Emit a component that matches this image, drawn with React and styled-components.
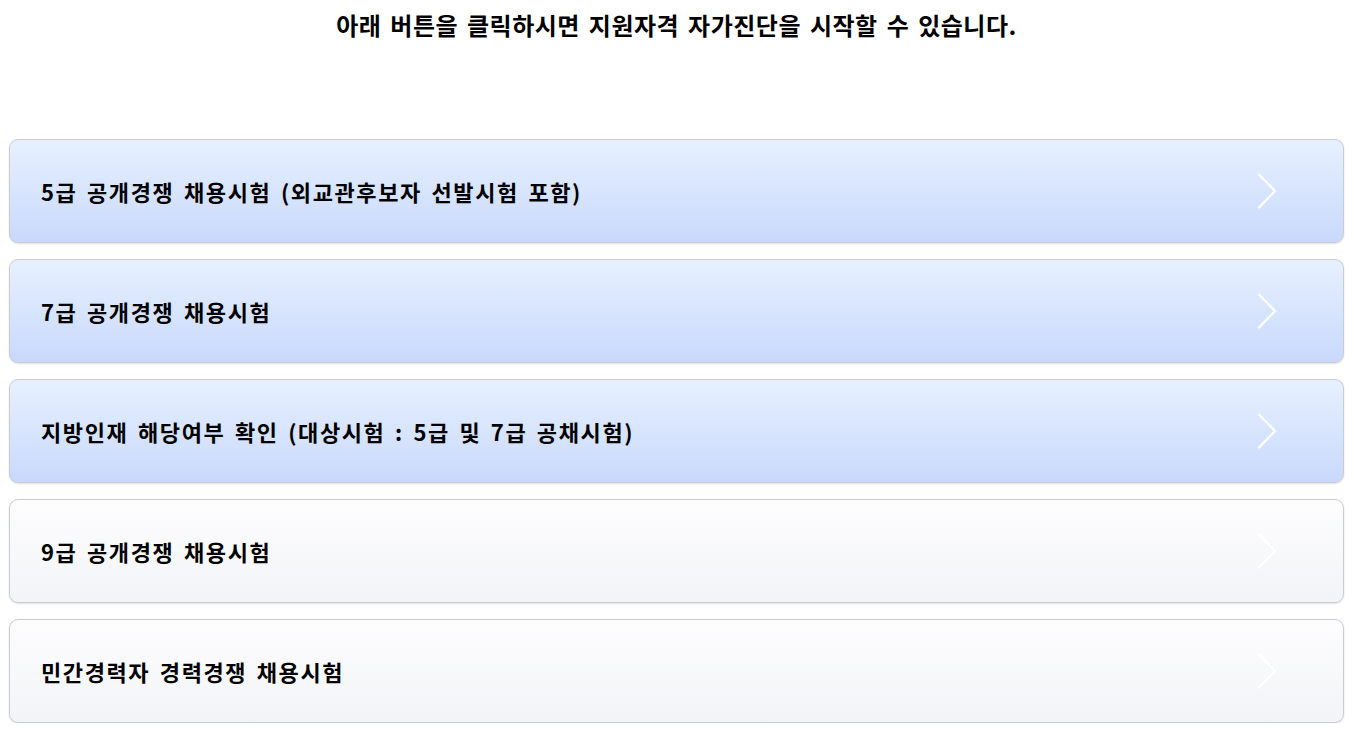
import React from 'react';
import styled, { createGlobalStyle } from 'styled-components';

const GlobalStyle = createGlobalStyle`
  html, body {
    margin: 0;
    padding: 0;
    background: #fff;
  }
  body {
    font-family: "Noto Sans CJK KR", "Noto Sans", sans-serif;
    color: #000;
  }
`;

const items = [
  { label: '5급 공개경쟁 채용시험 (외교관후보자 선발시험 포함)', tone: 'blue' },
  { label: '7급 공개경쟁 채용시험', tone: 'blue' },
  { label: '지방인재 해당여부 확인 (대상시험 : 5급 및 7급 공채시험)', tone: 'blue' },
  { label: '9급 공개경쟁 채용시험', tone: 'gray' },
  { label: '민간경력자 경력경쟁 채용시험', tone: 'gray' },
];

function Chevron() {
  return (
    <ChevronIcon width="20" height="36" viewBox="0 0 20 36" aria-hidden="true">
      <polyline points="2,1.5 18,18 2,34.5" />
    </ChevronIcon>
  );
}

function App() {
  return (
    <>
      <GlobalStyle />
      <Page>
        <Intro>아래 버튼을 클릭하시면 지원자격 자가진단을 시작할 수 있습니다.</Intro>
        <ExamList>
          {items.map((item) => (
            <ExamButton key={item.label} $tone={item.tone} type="button">
              <ExamLabel>{item.label}</ExamLabel>
              <Chevron />
            </ExamButton>
          ))}
        </ExamList>
      </Page>
    </>
  );
}

const Page = styled.div`
  padding: 8px 10px 0 9px;
`;

const Intro = styled.h2`
  margin: 0;
  height: 34px;
  line-height: 34px;
  text-align: center;
  font-size: 24px;
  font-weight: 700;
  letter-spacing: 0.5px;
  word-spacing: 3px;
`;

const ExamList = styled.div`
  display: flex;
  flex-direction: column;
  gap: 16px;
  margin-top: 97px;
`;

const ExamButton = styled.button`
  display: flex;
  align-items: center;
  justify-content: space-between;
  height: 104px;
  padding: 0 66px 0 31px;
  border: 1px solid #c9ccd2;
  border-radius: 9px;
  box-shadow: 0 1px 2px rgba(0, 0, 0, 0.12);
  background: ${({ $tone }) =>
    $tone === 'blue'
      ? 'linear-gradient(to bottom, #e6f0ff 0%, #c9d9fc 100%)'
      : 'linear-gradient(to bottom, #fdfdfe 0%, #f3f4f7 100%)'};
  font-family: inherit;
  text-align: left;
  cursor: pointer;
`;

const ExamLabel = styled.span`
  font-size: 22px;
  font-weight: 700;
  color: #000;
  letter-spacing: 1.6px;
  word-spacing: 3px;
`;

const ChevronIcon = styled.svg`
  flex: none;
  fill: none;
  stroke: #fff;
  stroke-width: 2.2;
  stroke-linecap: round;
  stroke-linejoin: round;
`;

export default App;
